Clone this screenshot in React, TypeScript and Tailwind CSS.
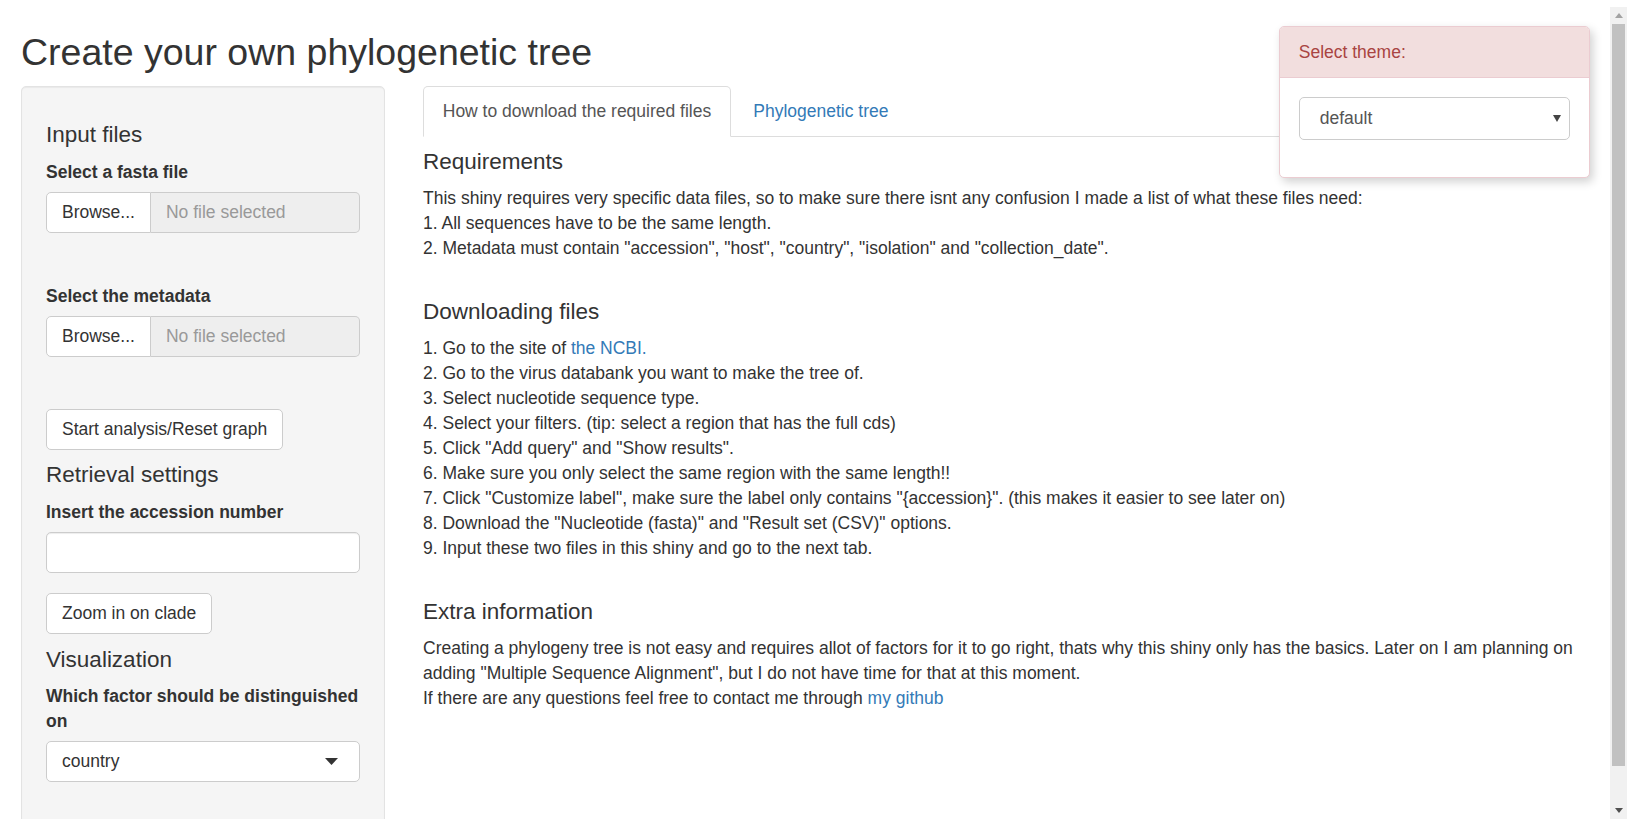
import type { ReactNode } from 'react';

const H4 = ({ children, className = '' }: { children: ReactNode; className?: string }) => (
  <h4 className={`text-[22.5px] leading-[25px] font-normal ${className}`}>{children}</h4>
);

const Label = ({ children, className = '' }: { children: ReactNode; className?: string }) => (
  <label className={`block font-bold text-[17.5px] leading-[25px] ${className}`}>{children}</label>
);

const Btn = ({ children, className = '' }: { children: ReactNode; className?: string }) => (
  <button className={`self-start h-[41px] px-[15px] bg-white border border-[#ccc] rounded-[5px] text-[17.5px] leading-[25px] text-[#333] ${className}`}>
    {children}
  </button>
);

function FileInput({ className = '' }: { className?: string }) {
  return (
    <div className={`flex h-[41px] ${className}`}>
      <span className="flex items-center px-[15px] bg-white border border-[#ccc] rounded-l-[5px] text-[17.5px] text-[#333]">
        Browse...
      </span>
      <span className="flex-1 flex items-center px-[15px] bg-[#eee] border border-l-0 border-[#ccc] rounded-r-[5px] text-[17.5px] text-[#999]">
        No file selected
      </span>
    </div>
  );
}

function Sidebar() {
  return (
    <div className="w-[364px] shrink-0 flex flex-col bg-[#f5f5f5] border border-[#e3e3e3] rounded-[5px] px-[24px] pt-[24px] pb-[44px] shadow-[inset_0_1px_1px_rgba(0,0,0,0.05)]">
      <H4 className="mt-[11px]">Input files</H4>
      <Label className="mt-[13px]">Select a fasta file</Label>
      <FileInput className="mt-[7px]" />
      <Label className="mt-[51px]">Select the metadata</Label>
      <FileInput className="mt-[7px]" />
      <Btn className="mt-[52px]">Start analysis/Reset graph</Btn>

      <H4 className="mt-[12px]">Retrieval settings</H4>
      <Label className="mt-[13px]">Insert the accession number</Label>
      <div className="mt-[7px] h-[41px] bg-white border border-[#ccc] rounded-[5px] shadow-[inset_0_1px_1px_rgba(0,0,0,0.075)]" />
      <Btn className="mt-[20px]">Zoom in on clade</Btn>

      <H4 className="mt-[13px]">Visualization</H4>
      <Label className="mt-[12px]">Which factor should be distinguished on</Label>
      <div className="mt-[7px] h-[41px] flex items-center justify-between pl-[15px] pr-[21px] bg-white border border-[#ccc] rounded-[5px] text-[17.5px] text-[#333]">
        <span>country</span>
        <svg width="13" height="7" viewBox="0 0 13 7">
          <path d="M0 0 H13 L6.5 7 Z" fill="#333" />
        </svg>
      </div>
    </div>
  );
}

const Line = ({ children }: { children: ReactNode }) => <div className="leading-[25px]">{children}</div>;
const A = ({ children }: { children: ReactNode }) => <a className="text-[#337ab7]">{children}</a>;

function MainPanel() {
  return (
    <div className="ml-[38px] w-[1168px] flex flex-col text-[17.5px]">
      <ul className="flex border-b border-[#ddd]">
        <li className="mb-[-1px] px-[18.75px] pt-[11.5px] pb-[12.5px] leading-[25px] bg-white border border-[#ddd] border-b-transparent rounded-t-[5px] text-[#555]">
          How to download the required files
        </li>
        <li className="mb-[-1px] ml-[2.5px] px-[18.75px] pt-[11.5px] pb-[12.5px] leading-[25px] border border-transparent text-[#337ab7]">
          Phylogenetic tree
        </li>
      </ul>

      <H4 className="mt-[11.5px] mb-[12.5px]">Requirements</H4>
      <Line>
        This shiny requires very specific data files, so to make sure there isnt any confusion I made a list of what these
        files need:
      </Line>
      <Line>1. All sequences have to be the same length.</Line>
      <Line>2. Metadata must contain "accession", "host", "country", "isolation" and "collection_date".</Line>
      <div className="h-[25px]" />

      <H4 className="mt-[12.5px] mb-[12.5px]">Downloading files</H4>
      <Line>
        1. Go to the site of <A>the NCBI.</A>
      </Line>
      <Line>2. Go to the virus databank you want to make the tree of.</Line>
      <Line>3. Select nucleotide sequence type.</Line>
      <Line>4. Select your filters. (tip: select a region that has the full cds)</Line>
      <Line>5. Click "Add query" and "Show results".</Line>
      <Line>6. Make sure you only select the same region with the same length!!</Line>
      <Line>7. Click "Customize label", make sure the label only contains "{'{accession}'}". (this makes it easier to see later on)</Line>
      <Line>8. Download the "Nucleotide (fasta)" and "Result set (CSV)" options.</Line>
      <Line>9. Input these two files in this shiny and go to the next tab.</Line>
      <div className="h-[25px]" />

      <H4 className="mt-[12.5px] mb-[12.5px]">Extra information</H4>
      <Line>
        Creating a phylogeny tree is not easy and requires allot of factors for it to go right, thats why this shiny only has
        the basics. Later on I am planning on adding "Multiple Sequence Alignment", but I do not have time for that at this
        moment.
      </Line>
      <Line>
        If there are any questions feel free to contact me through <A>my github</A>
      </Line>
    </div>
  );
}

function ThemeSelector() {
  // floating themeSelector panel, top right
  return (
    <div className="absolute left-[1279px] top-[26px] w-[311px] bg-white border border-[#ebccd1] rounded-[5px] shadow-[3px_4px_10px_rgba(0,0,0,0.18)] text-[17.5px]">
      <div className="px-[18.75px] py-[12.5px] leading-[25px] bg-[#f2dede] text-[#a94442] border-b border-[#ebccd1] rounded-t-[4px]">
        Select theme:
      </div>
      <div className="px-[18.75px] pt-[19px] pb-[37.5px]">
        <div className="h-[42.5px] flex items-center justify-between pl-[20px] pr-[8px] border border-[#ccc] rounded-[5px] text-[#555]">
          <span>default</span>
          <svg width="8" height="7" viewBox="0 0 8 7">
            <path d="M0 0 H8 L4 7 Z" fill="#444" />
          </svg>
        </div>
      </div>
    </div>
  );
}

function Scrollbar() {
  return (
    <div className="mt-[7px] w-[17px] h-[812px] bg-[#f1f1f1] flex flex-col items-center">
      <div className="h-[17px] flex items-center justify-center">
        <svg width="8" height="5" viewBox="0 0 8 5">
          <path d="M0 5 L4 0 L8 5 Z" fill="#a3a3a3" />
        </svg>
      </div>
      <div className="w-[13px] h-[742px] bg-[#c1c1c1]" />
      <div className="flex-1" />
      <div className="h-[17px] flex items-center justify-center">
        <svg width="8" height="5" viewBox="0 0 8 5">
          <path d="M0 0 L4 5 L8 0 Z" fill="#505050" />
        </svg>
      </div>
    </div>
  );
}

export default function App() {
  return (
    <div className="w-[1647px] h-[835px] bg-white flex items-start overflow-hidden text-[#333] font-['Liberation_Sans',Arial,sans-serif]">
      <div className="relative w-[1610px] h-[819px] overflow-hidden px-[21px]">
        <h2 className="mt-[32px] text-[37.5px] leading-[41px] font-normal">Create your own phylogenetic tree</h2>
        <div className="mt-[13px] flex items-start">
          <Sidebar />
          <MainPanel />
        </div>
        <ThemeSelector />
      </div>
      <Scrollbar />
    </div>
  );
}
